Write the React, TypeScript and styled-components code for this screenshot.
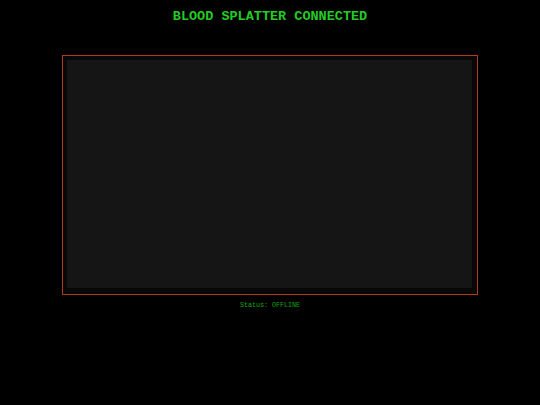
import React from 'react';
import styled, { createGlobalStyle } from 'styled-components';

const Global = createGlobalStyle`
  html, body {
    margin: 0;
    padding: 0;
    background: #000;
  }
  body {
    font-family: 'Liberation Mono', 'Courier New', monospace;
  }
`;

const Page = styled.div`
  width: 540px;
  height: 405px;
  display: flex;
  flex-direction: column;
  align-items: center;
  background: #000;
`;

const Title = styled.h1`
  margin: 9px 0 0 0;
  font-size: 13.5px;
  line-height: 15px;
  font-weight: bold;
  color: #22cc22;
  letter-spacing: 0;
`;

const Frame = styled.div`
  margin-top: 31px;
  width: 405px;
  height: 228px;
  padding: 4px 5px 6px 4px;
  border: 1px solid #b03c1c;
  background: #080808;
`;

const Screen = styled.div`
  width: 100%;
  height: 100%;
  background: #151515;
`;

const Status = styled.p`
  margin: 6px 0 0 0;
  font-size: 6.7px;
  line-height: 9px;
  color: #11aa11;
`;

export default function App() {
  return (
    <>
      <Global />
      <Page>
        <Title>BLOOD SPLATTER CONNECTED</Title>
        <Frame>
          <Screen />
        </Frame>
        <Status>Status: OFFLINE</Status>
      </Page>
    </>
  );
}
